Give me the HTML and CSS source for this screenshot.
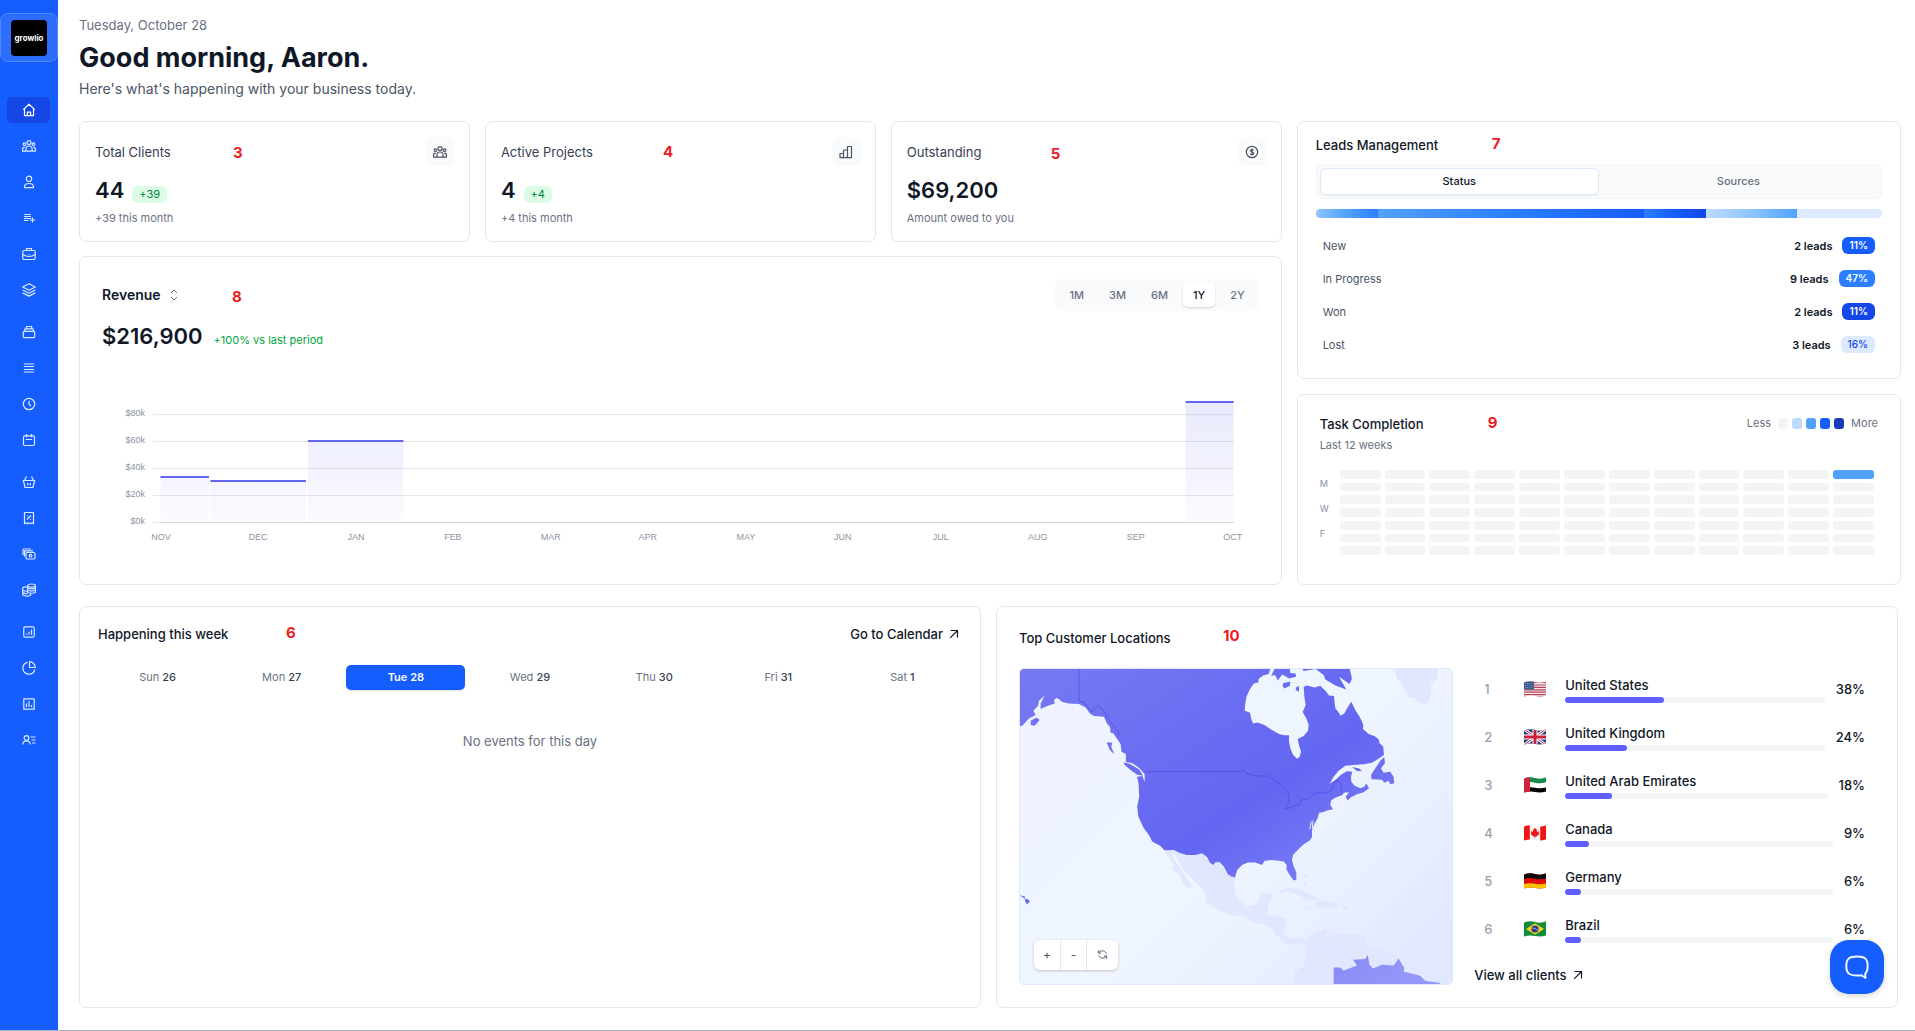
FILE: index.html
```html
<!DOCTYPE html>
<html lang="en">
<head>
<meta charset="utf-8">
<meta name="viewport" content="width=device-width, initial-scale=1">
<title>Growlio – Dashboard</title>
<link rel="stylesheet" href="styles.css">
</head>
<body>
<svg class="defs" width="0" height="0" aria-hidden="true">
  <symbol id="i-users" viewBox="0 0 14 14">
    <circle cx="7" cy="3.6" r="2"/><path d="M3.9 12.2V10.400A3.100 3.400 0 0 1 10.100 10.400V12.200Z"/>
    <circle cx="2.500" cy="5.200" r="1.300"/><circle cx="11.500" cy="5.200" r="1.300"/>
    <path d="M3.900 12.200H.5V10.500C.5 9 1.300 8.200 2.800 8.200M10.100 12.200H13.500V10.500C13.500 9 12.700 8.200 11.200 8.200"/>
  </symbol>
  <symbol id="i-arrow" viewBox="0 0 10 10"><path d="M1.500 1.500H8.500V8.500M8.500 1.500L1.200 8.800"/></symbol>
  <clipPath id="wave"><path d="M0 1.500Q5.500 -.5 11 1T22 .6V14.500Q16.500 16 11 15T0 15.600Z"/></clipPath>
</svg>

<div class="app">
  <nav class="sidebar" aria-label="Main">
    <a class="brand" href="#"><span class="brand-logo">growlio</span></a>
    <div class="nav-group">
      <a class="nav-item active" href="#" aria-label="Home"><svg viewBox="0 0 14 14"><path d="M1.200 6.600L7 1.200L12.800 6.600M2.500 5.600V12.600H11.500V5.600M5.400 12.600V9.200H8.600V12.600"/></svg></a>
      <a class="nav-item" href="#" aria-label="Clients"><svg><use href="#i-users"/></svg></a>
      <a class="nav-item" href="#" aria-label="Contacts"><svg viewBox="0 0 14 14"><circle cx="7" cy="3.800" r="2.700"/><path d="M2.500 12.700V11.700C2.500 9.500 4.200 8.500 7 8.500S11.500 9.500 11.500 11.700V12.700Z"/></svg></a>
      <a class="nav-item" href="#" aria-label="Add to list"><svg viewBox="0 0 14 14"><path d="M2 3.500H9M2 5.500H9M2 7.500H9M2 9.500H6.500M10.500 6.500V11.500M8 9H13"/></svg></a>
      <a class="nav-item" href="#" aria-label="Projects"><svg viewBox="0 0 14 14"><rect x=".8" y="3.500" width="12.400" height="9" rx="1.200"/><path d="M4.500 3.500V1.500H9.500V3.500M.8 7.500Q7 11.500 13.200 7.500M6.500 7.500H7.500"/></svg></a>
      <a class="nav-item" href="#" aria-label="Services"><svg viewBox="0 0 14 14"><path d="M7 .8L13.300 4L7 7.200L.7 4ZM.7 7L7 10.200L13.300 7M.7 9.900L7 13.100L13.300 9.900"/></svg></a>
    </div>
    <div class="nav-group">
      <a class="nav-item" href="#" aria-label="Templates"><svg viewBox="0 0 14 14"><rect x="1.300" y="6.300" width="11.400" height="6.400" rx="1.200"/><path d="M2.300 6L3.200 3.800H10.800L11.700 6M4 3.500L4.500 1.500H9.500L10 3.500"/></svg></a>
      <a class="nav-item" href="#" aria-label="Tasks"><svg viewBox="0 0 14 14"><path d="M1.800 3H12.200M1.800 5.500H12.200M1.800 8.500H12.200M1.800 11H12.200"/></svg></a>
      <a class="nav-item" href="#" aria-label="Time"><svg viewBox="0 0 14 14"><circle cx="7" cy="7" r="5.700"/><path d="M7 3.800V7L9 9.200"/></svg></a>
      <a class="nav-item" href="#" aria-label="Calendar"><svg viewBox="0 0 14 14"><rect x="1.500" y="2.800" width="11" height="9.700" rx="1.200"/><path d="M4.500 1V4.200M9.500 1V4.200M3.800 6.500H10.200"/></svg></a>
    </div>
    <div class="nav-group">
      <a class="nav-item" href="#" aria-label="Products"><svg viewBox="0 0 14 14"><path d="M1.200 5.500H12.800L12 8L11 12.500H3L2 8ZM2.500 5.500L4.500 1.500M11.500 5.500L9.500 1.500M5.700 8V10.500M8.300 8V10.500"/></svg></a>
      <a class="nav-item" href="#" aria-label="Invoices"><svg viewBox="0 0 14 14"><path d="M2.500 1.500H11.500V12.800L10 11.800L8.500 12.800L7 11.800L5.500 12.800L4 11.800L2.500 12.800ZM5 8.500L9 4.500M5 5H6M8 8.500H9"/></svg></a>
      <a class="nav-item" href="#" aria-label="Payments"><svg viewBox="0 0 14 14"><rect x="4" y="5.500" width="9" height="6.500" rx="1.200"/><circle cx="8.500" cy="8.700" r="1.300"/><path d="M2.500 9.500V4Q2.500 3.800 3 3.800H11M1 8V3Q1 2 2 2H9"/></svg></a>
      <a class="nav-item" href="#" aria-label="Expenses"><svg viewBox="0 0 14 14"><ellipse cx="9.500" cy="2.600" rx="3.900" ry="1.600"/><path d="M5.600 2.600V9.500Q9.500 11 13.400 9.500V2.600M5.600 5Q9.500 6.600 13.400 5M5.600 7.300Q9.500 8.800 13.400 7.300M5.300 4Q2 3.500 .7 4.800V11.800Q4 14 8.500 12.500V10.500M.7 7.200Q3 8.500 5.500 8.200M.7 9.600Q3 11 5.500 10.700"/></svg></a>
    </div>
    <div class="nav-group">
      <a class="nav-item" href="#" aria-label="Reports"><svg viewBox="0 0 14 14"><rect x="1.800" y="1.800" width="10.400" height="10.400" rx="1.200"/><path d="M4.500 9.800V8.500M7 9.800V6.800M9.500 9.800V4.500"/></svg></a>
      <a class="nav-item" href="#" aria-label="Analytics"><svg viewBox="0 0 14 14"><path d="M5.500 1.300A6 6 0 1 0 12.800 8.500M7.500 .7V6.500H13.300A6 6 0 0 0 7.500 .7Z"/></svg></a>
      <a class="nav-item" href="#" aria-label="Statistics"><svg viewBox="0 0 14 14"><rect x="1.800" y="1.800" width="10.400" height="10.400"/><path d="M4.500 10V6.500M7 10V4M9.500 10V8"/></svg></a>
      <a class="nav-item" href="#" aria-label="Team"><svg viewBox="0 0 14 14"><circle cx="4.500" cy="5" r="2.300"/><path d="M.7 11.500C1 8.800 2.500 7.800 4.500 7.800S8 8.800 8.300 11.500M8.500 4H13.500M9.500 7H13.500M10 10H13.500"/></svg></a>
    </div>
  </nav>

  <main class="main">
    <header class="greeting">
      <p class="date">Tuesday, October 28</p>
      <h1>Good morning, Aaron.</h1>
      <p class="lead">Here's what's happening with your business today.</p>
    </header>

    <div class="top-grid">
      <div class="left-col">
        <div class="stats">
          <section class="card stat">
            <div class="stat-head"><h2>Total Clients</h2><span class="icon-box"><svg><use href="#i-users"/></svg></span></div>
            <p class="stat-value"><strong>44</strong><span class="delta">+39</span></p>
            <p class="note">+39 this month</p>
            <span class="marker marker-3">3</span>
          </section>
          <section class="card stat">
            <div class="stat-head"><h2>Active Projects</h2><span class="icon-box"><svg viewBox="0 0 14 14"><path d="M1 12.600V8.500H4.500V12.600ZM4.500 12.600V5H8.500V12.600ZM8.500 12.600V1.500H12.500V12.600Z"/></svg></span></div>
            <p class="stat-value"><strong>4</strong><span class="delta">+4</span></p>
            <p class="note">+4 this month</p>
            <span class="marker marker-4">4</span>
          </section>
          <section class="card stat">
            <div class="stat-head"><h2>Outstanding</h2><span class="icon-box"><svg viewBox="0 0 14 14"><circle cx="7" cy="7" r="5.700"/><path d="M8.700 5.200C8.200 4.300 5.500 4.200 5.500 5.700S8.700 6.800 8.700 8.400S5.800 9.800 5.200 8.700M7 3.500V10.500"/></svg></span></div>
            <p class="stat-value"><strong>$69,200</strong></p>
            <p class="note">Amount owed to you</p>
            <span class="marker marker-5">5</span>
          </section>
        </div>

        <section class="card revenue">
          <div class="revenue-head">
            <button class="metric" type="button">Revenue <svg viewBox="0 0 12 12"><path d="M3 4L6 1L9 4M3 8L6 11L9 8"/></svg></button>
            <div class="ranges">
              <button type="button">1M</button><button type="button">3M</button><button type="button">6M</button><button class="selected" type="button">1Y</button><button type="button">2Y</button>
            </div>
          </div>
          <p class="revenue-total"><strong>$216,900</strong><span>+100% vs last period</span></p>
          <svg class="chart" viewBox="102 362 1157 200" role="img" aria-label="Revenue by month">
            <defs><linearGradient id="bar" gradientUnits="userSpaceOnUse" x1="0" y1="402" x2="0" y2="522"><stop offset="0" stop-color="#6366f1" stop-opacity=".14"/><stop offset="1" stop-color="#6366f1" stop-opacity=".03"/></linearGradient></defs>
            <path class="grid" d="M153 414.500H1234M153 441.500H1234M153 468.500H1234M153 495.500H1234M153 522.500H1234"/>
            <path fill="url(#bar)" d="M160.500 477H209V522H160.500ZM210.500 481H306V522H210.500ZM308 441H403.500V522H308ZM1186 402H1234V522H1186Z"/>
            <path class="axis" d="M160 522.500H1234"/>
            <path class="cap" d="M160.500 477H209M210.500 481H306M308 441H403.500M1186 402H1234"/>
            <g class="y-labels"><text x="145" y="416">$80k</text><text x="145" y="443">$60k</text><text x="145" y="470">$40k</text><text x="145" y="497">$20k</text><text x="145" y="524">$0k</text></g>
            <g class="x-labels"><text x="161" y="540">NOV</text><text x="258" y="540">DEC</text><text x="356" y="540">JAN</text><text x="453" y="540">FEB</text><text x="551" y="540">MAR</text><text x="648" y="540">APR</text><text x="746" y="540">MAY</text><text x="843" y="540">JUN</text><text x="941" y="540">JUL</text><text x="1038" y="540">AUG</text><text x="1136" y="540">SEP</text><text x="1233" y="540">OCT</text></g>
          </svg>
          <span class="marker marker-8">8</span>
        </section>
      </div>

      <div class="right-col">
        <section class="card leads">
          <h2>Leads Management</h2>
          <div class="tabs"><button class="selected" type="button">Status</button><button type="button">Sources</button></div>
          <div class="split-bar"><span class="s-new"></span><span class="s-progress"></span><span class="s-won"></span><span class="s-lost"></span></div>
          <ul class="lead-list">
            <li><span>New</span><strong>2 leads</strong><em class="p-new">11%</em></li>
            <li><span>In Progress</span><strong>9 leads</strong><em class="p-progress">47%</em></li>
            <li><span>Won</span><strong>2 leads</strong><em class="p-won">11%</em></li>
            <li><span>Lost</span><strong>3 leads</strong><em class="p-lost">16%</em></li>
          </ul>
          <span class="marker marker-7">7</span>
        </section>

        <section class="card tasks">
          <div class="tasks-head">
            <div><h2>Task Completion</h2><p class="note">Last 12 weeks</p></div>
            <div class="legend">Less<span class="swatches"><i class="l0"></i><i class="l1"></i><i class="l2"></i><i class="l3"></i><i class="l4"></i></span>More</div>
          </div>
          <div class="heat">
            <div class="heat-days"><span>M</span><span>W</span><span>F</span></div>
            <div class="heat-grid">
              <i></i><i></i><i></i><i></i><i></i><i></i><i></i><i></i><i></i><i></i><i></i><i class="l2"></i>
              <i></i><i></i><i></i><i></i><i></i><i></i><i></i><i></i><i></i><i></i><i></i><i></i>
              <i></i><i></i><i></i><i></i><i></i><i></i><i></i><i></i><i></i><i></i><i></i><i></i>
              <i></i><i></i><i></i><i></i><i></i><i></i><i></i><i></i><i></i><i></i><i></i><i></i>
              <i></i><i></i><i></i><i></i><i></i><i></i><i></i><i></i><i></i><i></i><i></i><i></i>
              <i></i><i></i><i></i><i></i><i></i><i></i><i></i><i></i><i></i><i></i><i></i><i></i>
              <i></i><i></i><i></i><i></i><i></i><i></i><i></i><i></i><i></i><i></i><i></i><i></i>
            </div>
          </div>
          <span class="marker marker-9">9</span>
        </section>
      </div>
    </div>

    <div class="bottom-grid">
      <section class="card week">
        <div class="week-head"><h2>Happening this week</h2><a class="link" href="#">Go to Calendar <svg><use href="#i-arrow"/></svg></a></div>
        <div class="days">
          <button type="button">Sun <b>26</b></button><button type="button">Mon <b>27</b></button><button class="selected" type="button">Tue <b>28</b></button><button type="button">Wed <b>29</b></button><button type="button">Thu <b>30</b></button><button type="button">Fri <b>31</b></button><button type="button">Sat <b>1</b></button>
        </div>
        <p class="empty">No events for this day</p>
        <span class="marker marker-6">6</span>
      </section>

      <section class="card locations">
        <h2>Top Customer Locations</h2>
        <div class="locations-body">
          <div class="map">
            <svg class="map-art" viewBox="28 205 1298 949" preserveAspectRatio="xMidYMid slice" role="img" aria-label="Customer map of North America">
              <defs><linearGradient id="land" gradientUnits="userSpaceOnUse" x1="250" y1="100" x2="1000" y2="1250"><stop offset="0" stop-color="#7678f2"/><stop offset=".5" stop-color="#6366f1"/><stop offset="1" stop-color="#9496f8"/></linearGradient></defs>
              <g class="land-quiet">
                <path d="M1155 205H1282L1280 235L1262 250L1262 275L1252 308L1235 310L1210 292L1195 290L1175 250L1160 232Z"/>
                <path d="M480 752L528 765L575 760L598 788L628 787L652 822L674 832L670 860L675 885L690 905L710 920L735 915L745 905L750 888L768 882L785 885L780 900L772 912L770 935L760 945L790 950L822 955L825 965L818 1000L835 1020L870 1018L890 1022L885 1036L860 1028L845 1035L825 1030L800 1005L785 985L760 972L725 965L700 948L665 945L620 930L585 905L590 885L570 860L545 835L520 810L495 765Z"/>
                <path d="M462 752L482 752L490 780L505 800L522 825L543 860L537 868L515 846L510 826L485 808L490 795Z"/>
                <path d="M885 1025L900 1008L920 1000L948 988L952 994L938 1012L955 1014L965 1003L1010 1005L1060 1008L1062 1020L1085 1045L1110 1055L1140 1060L1165 1075L1140 1095L1110 1100L1072 1072L1030 1085L1028 1098L1000 1112L970 1106L972 1154H850L855 1118L880 1100L888 1062Z"/>
                <path d="M805 880L830 865L870 870L890 882L922 897L890 900L865 885L830 873ZM920 905L960 905L985 915L960 923L918 918ZM875 920L900 922L890 927ZM995 918L1015 921L1005 926ZM868 822L890 824L888 830ZM880 842L887 852L883 858Z"/>
                <path d="M734 918L732 935L745 945M770 960L800 958M790 985L818 985M925 1003L918 1030L940 1045L975 1050L975 1075M1062 1020L1058 1045L1072 1066M1100 1055L1098 1098M1138 1062L1130 1095M852 1118L885 1110L920 1130L915 1154"/>
              </g>
              <path fill="url(#land)" d="M28 205H780L775 222L758 226L745 236L744 247L730 250L718 268L708 290L704 315L703 332L719 338L722 355L728 370L742 367L762 375L780 387L806 402L822 406L836 406L836 425L840 445L848 464L860 476L868 470L872 455L866 436L862 417L880 408L893 392L895 375L888 355L877 336L886 315L882 290L880 260L890 256L912 262L930 257L948 275L956 286L971 288L973 310L975 325L984 335L991 347L1002 340L1010 325L1023 305L1035 330L1048 350L1059 373L1058 387L1075 402L1092 408L1105 418L1108 430L1119 440L1121 465L1105 476L1085 488L1060 493L1030 495L1005 497L985 512L970 530L958 551L975 540L992 524L1010 514L1026 515L1022 530L1023 545L1033 557L1050 565L1062 560L1068 550L1076 565L1060 577L1040 583L1022 592L1012 602L1006 590L1016 578L1000 576L998 584L975 593L962 602L960 615L968 628L950 632L925 642L922 655L912 672L905 690L905 712L898 722L880 733L862 750L848 765L845 780L850 800L858 818L858 840L850 842L838 825L828 808L829 795L820 785L800 782L780 780L762 783L755 795L735 788L712 788L695 795L680 810L674 832L662 830L652 822L640 800L628 787L615 787L608 795L598 788L590 772L575 760L555 765L528 765L505 758L490 750L462 751L450 738L425 725L415 705L400 685L390 665L383 648L380 620L386 590L384 550L379 530L395 528L403 545L402 522L385 503L365 490L346 486L346 462L333 455L330 432L316 412L308 400L300 398L298 380L290 372L280 350L250 348L238 340L225 322L205 312L175 310L155 306L140 294L130 298L132 310L110 318L90 327L90 310L102 286L85 302L82 318L68 332L75 345L55 355L34 378H28ZM793 205L782 228L794 225L802 241L816 223L836 235L857 230L856 220L840 219L838 205ZM820 248L840 245L838 258L822 265L816 256ZM857 262L866 257L866 275L856 270ZM875 205H1018L1025 235L1018 252L986 230L1008 268L975 256L945 238L940 225L916 207L880 213ZM1122 472L1112 480L1098 500L1082 525L1084 538L1115 539L1122 548L1135 542L1140 553L1152 550L1150 530L1140 515L1120 518L1112 505L1124 490ZM340 487L360 493L385 508L398 527L380 524L360 510L342 495ZM288 427L305 428L302 440L311 463L298 450ZM60 362L78 352L87 360L72 377L60 375ZM28 886L42 890L44 898ZM42 900L50 897L58 905L48 914ZM1025 501L1045 505L1056 514L1040 513ZM970 1154V1103L990 1103L1000 1112L1020 1105L1040 1097L1028 1080L1065 1078L1072 1066L1078 1095L1088 1106L1115 1095L1150 1097L1165 1076L1182 1105L1180 1115L1230 1128L1245 1143L1290 1150V1154Z"/>
              <path class="inlet" d="M1030 552Q1042 562 1055 555M903 665L898 688M908 662L906 685M925 640L945 637"/>
              <path class="border" d="M205 205V303L222 308L243 335L262 316L280 332L300 368L325 395L322 412M403 515H695L700 510L708 520L735 528L768 528L790 538L815 560L834 580L836 600L826 627L850 620L870 612L872 600L895 597L912 580L950 578L965 570L970 548L985 542L993 555L993 575L1004 578"/>
            </svg>
            <div class="map-tools"><button type="button" aria-label="Zoom in">+</button><button type="button" aria-label="Zoom out">-</button><button class="reset" type="button" aria-label="Reset"><svg viewBox="0 0 12 12"><path d="M1.500 1.500V4.500H4.500M1.700 4.300C3 1.500 8.500 .8 10.200 5M10.500 10.500V7.500H7.500M10.300 7.700C9 10.500 3.500 11.200 1.800 7"/></svg></button></div>
          </div>
          <div class="countries">
            <ol>
              <li><span class="rank">1</span>
                <svg class="flag" viewBox="0 0 22 16"><g clip-path="url(#wave)"><path fill="#f5e6ea" d="M0 0H22V16H0Z"/><path stroke="#b4445c" stroke-width="1.200" d="M0 1.500H22M0 4H22M0 6.400H22M0 8.800H22M0 11.200H22M0 13.600H22M0 15.700H22"/><path fill="#3c5a8c" d="M0 0H10V8.500H0Z"/><path stroke="#9fb3d0" stroke-width=".6" stroke-dasharray="1 1" d="M1 2.500H9.500M1 4.500H9.500M1 6.500H9.500"/></g></svg>
                <div class="place"><span>United States</span><div class="track"><i style="width:38%"></i></div></div><strong>38%</strong></li>
              <li><span class="rank">2</span>
                <svg class="flag" viewBox="0 0 22 16"><g clip-path="url(#wave)"><path fill="#1f3f83" d="M0 0H22V16H0Z"/><path stroke="#fff" stroke-width="3" d="M0 0L22 16M22 0L0 16"/><path stroke="#c8203c" stroke-width="1" d="M0 0L22 16M22 0L0 16"/><path stroke="#fff" stroke-width="5" d="M11 0V16M0 8H22"/><path stroke="#c8203c" stroke-width="3" d="M11 0V16M0 8H22"/></g></svg>
                <div class="place"><span>United Kingdom</span><div class="track"><i style="width:24%"></i></div></div><strong>24%</strong></li>
              <li><span class="rank">3</span>
                <svg class="flag" viewBox="0 0 22 16"><g clip-path="url(#wave)"><path fill="#fff" d="M0 0H22V16H0Z"/><path fill="#138a4b" d="M0 0H22V5.200Q16.500 7 11 5.700T0 6Z"/><path fill="#000" d="M0 11Q5.500 9.500 11 10.700T22 10.500V16H0Z"/><path fill="#d3243e" d="M0 0H6V16H0Z"/></g></svg>
                <div class="place"><span>United Arab Emirates</span><div class="track"><i style="width:18%"></i></div></div><strong>18%</strong></li>
              <li><span class="rank">4</span>
                <svg class="flag" viewBox="0 0 22 16"><g clip-path="url(#wave)"><path fill="#f4f4f4" d="M0 0H22V16H0Z"/><path fill="#f01414" d="M0 0H5.800V16H0ZM16.200 0H22V16H16.200ZM11 2.500L12.200 4.800L13.200 4.300L12.900 7.200L15 6L14.800 8.200L15.300 9L12.500 11.500H11.300V13.500H10.700V11.500H9.500L6.700 9L7.200 8.200L7 6L9.100 7.200L8.800 4.300L9.800 4.800Z"/></g></svg>
                <div class="place"><span>Canada</span><div class="track"><i style="width:9%"></i></div></div><strong>9%</strong></li>
              <li><span class="rank">5</span>
                <svg class="flag" viewBox="0 0 22 16"><g clip-path="url(#wave)"><path fill="#e00b0b" d="M0 0H22V16H0Z"/><path fill="#0a0a0a" d="M0 0H22V5.200Q16.500 7 11 5.700T0 6Z"/><path fill="#f7c600" d="M0 11Q5.500 9.500 11 10.700T22 10.500V16H0Z"/></g></svg>
                <div class="place"><span>Germany</span><div class="track"><i style="width:6%"></i></div></div><strong>6%</strong></li>
              <li><span class="rank">6</span>
                <svg class="flag" viewBox="0 0 22 16"><g clip-path="url(#wave)"><path fill="#128c3c" d="M0 0H22V16H0Z"/><path fill="#f8cf1c" d="M2 8L11 2.200L20 8L11 13.800Z"/><circle cx="11" cy="8" r="3.600" fill="#2b3a8e"/><path stroke="#cdd6ee" stroke-width=".7" fill="none" d="M7.800 7Q11.500 6.600 14 9.500"/></g></svg>
                <div class="place"><span>Brazil</span><div class="track"><i style="width:6%"></i></div></div><strong>6%</strong></li>
            </ol>
            <a class="link" href="#">View all clients <svg><use href="#i-arrow"/></svg></a>
          </div>
        </div>
        <span class="marker marker-10">10</span>
      </section>
    </div>
  </main>
</div>

<button class="chat" type="button" aria-label="Open chat"><svg viewBox="0 0 24 24"><path d="M12 1.500C4 1.500 1.300 4 1.300 11S4 20.500 12 20.500Q14.500 20.500 16.500 20.200L20.500 23L20.200 18.500C22.200 17 22.700 14.500 22.700 11C22.700 4 20 1.500 12 1.500Z"/></svg></button>
</body>
</html>
```
FILE: styles.css
```css
:root {
  --ink: #101828;
  --body: #364153;
  --muted: #6a7282;
  --faint: #99a1af;
  --line: #e5e7eb;
  --soft: #f9fafb;
  --track: #f3f4f6;
  --blue: #155dfc;
  --indigo: #615fff;
}

*, *::before, *::after { box-sizing: border-box; }

body {
  margin: 0;
  font-family: Inter, "Liberation Sans", sans-serif;
  font-size: 13px;
  line-height: 18px;
  color: var(--ink);
  background: #fff;
}

h1, h2, p, ul, ol { margin: 0; padding: 0; }
ul, ol { list-style: none; }
h2 { font-size: 13px; line-height: 18px; font-weight: 500; }
button { font: inherit; color: inherit; background: none; border: 0; padding: 0; }
a { color: inherit; text-decoration: none; }
svg { display: block; fill: none; }
.defs { position: absolute; }

.app {
  display: flex;
  min-height: 100vh;
  border-bottom: 1px solid #aab0b9;
}

/* Sidebar */
.sidebar {
  flex: none;
  width: 58px;
  padding-top: 13px;
  background: var(--blue);
  color: #dbeafe;
}
.brand {
  display: flex;
  align-items: center;
  justify-content: center;
  height: 49px;
  margin-bottom: 35px;
  border: 1px solid #5089fd;
  border-radius: 8px;
  background: #2c6dfd;
}
.brand-logo {
  display: flex;
  align-items: center;
  justify-content: center;
  width: 36px;
  height: 36px;
  border-radius: 4px;
  background: #000;
  color: #fff;
  font-size: 8px;
  font-weight: 700;
  line-height: 10px;
}
.nav-group {
  display: flex;
  flex-direction: column;
  gap: 10px;
  padding: 0 8px 0 7px;
  margin-bottom: 16px;
}
.nav-item {
  display: flex;
  align-items: center;
  justify-content: center;
  height: 26px;
  border-radius: 5px;
}
.nav-item.active { background: #1447e6; color: #fff; }
.nav-item svg, .icon-box svg {
  width: 14px;
  height: 14px;
  stroke: currentColor;
  stroke-width: 1.2;
  stroke-linejoin: round;
}

/* Page */
.main {
  flex: 1;
  min-width: 0;
  padding: 16px 14px 20px 21px;
}
.greeting { margin-bottom: 22px; }
.date { color: var(--muted); }
h1 { margin: 8px 0 5px; font-size: 27px; line-height: 32px; font-weight: 700; }
.lead { font-size: 14px; line-height: 20px; color: #4a5565; }

.card {
  position: relative;
  border: 1px solid var(--line);
  border-radius: 7px;
  background: #fff;
}
.note { font-size: 11px; line-height: 16px; color: var(--muted); }

.top-grid {
  display: grid;
  grid-template-columns: 1.99fr 1fr;
  gap: 15px;
}
.left-col, .right-col {
  display: flex;
  flex-direction: column;
  gap: 14px;
  min-width: 0;
}
.right-col { gap: 15px; }

/* Stat cards */
.stats { display: grid; grid-template-columns: repeat(3, 1fr); gap: 15px; }
.stat { padding: 15px 14px 15px 15px; }
.stat-head { display: flex; align-items: center; justify-content: space-between; margin-bottom: 10px; }
.stat-head h2 { font-weight: 400; color: var(--body); }
.icon-box {
  display: flex;
  align-items: center;
  justify-content: center;
  width: 29px;
  height: 29px;
  border-radius: 7px;
  background: var(--soft);
  color: #4a5565;
}
.stat-value { display: flex; align-items: baseline; gap: 8px; height: 28px; margin-bottom: 6px; }
.stat-value strong, .revenue-total strong { font-size: 22px; line-height: 28px; font-weight: 600; }
.delta {
  padding: 0 7px;
  border-radius: 5px;
  background: #dcfce7;
  color: #008236;
  font-size: 11px;
  line-height: 17px;
}

/* Revenue */
.revenue { flex: 1; padding: 22px; }
.revenue-head { display: flex; align-items: center; justify-content: space-between; margin-bottom: 11px; }
.metric { display: flex; align-items: center; gap: 7px; font-size: 14px; font-weight: 600; }
.metric svg { width: 12px; height: 12px; stroke: var(--muted); }
.ranges {
  display: flex;
  gap: 5px;
  padding: 4px;
  border-radius: 8px;
  background: var(--soft);
  color: var(--muted);
  font-size: 11px;
  line-height: 24px;
  font-weight: 500;
}
.ranges button { padding: 0 10px; border-radius: 5px; }
.ranges .selected { background: #fff; color: var(--ink); box-shadow: 0 1px 2px rgba(0, 0, 0, .15); }
.revenue-total { display: flex; align-items: baseline; gap: 11px; margin-bottom: 12px; }
.revenue-total span { font-size: 11px; color: #00a63e; }
.chart { width: 100%; height: auto; }
.chart .grid { stroke: var(--line); }
.chart .axis { stroke: #d1d5db; }
.chart .cap { stroke: #6366f1; stroke-width: 2; }
.chart text { font-family: "Liberation Sans", Arial, sans-serif; font-size: 9px; fill: #8b93a1; }
.y-labels { text-anchor: end; }
.x-labels { text-anchor: middle; }

/* Leads */
.leads { padding: 14px 18px 17px; }
.tabs {
  display: grid;
  grid-template-columns: 1fr 1fr;
  margin: 10px 0 10px;
  padding: 3px;
  border: 1px solid var(--track);
  border-radius: 7px;
  background: var(--soft);
  font-size: 11px;
  line-height: 25px;
  font-weight: 500;
  color: var(--muted);
}
.tabs button { border: 1px solid transparent; border-radius: 6px; }
.tabs .selected { border-color: #dbeafe; background: #fff; color: var(--ink); box-shadow: 0 1px 2px rgba(0, 0, 0, .06); }
.split-bar { display: flex; height: 9px; margin-bottom: 11px; border-radius: 5px; overflow: hidden; background: #dbeafe; }
.s-new { width: 11%; background: linear-gradient(90deg, #8ec5ff, #51a2ff, #2b7fff); }
.s-progress { width: 47%; background: linear-gradient(90deg, #51a2ff, #2b7fff, #155dfc); }
.s-won { width: 11%; background: linear-gradient(90deg, #2b7fff, #155dfc, #1447e6); }
.s-lost { width: 16%; background: linear-gradient(90deg, #bedbff, #8ec5ff, #51a2ff); }
.lead-list li { display: flex; align-items: center; height: 33px; padding: 0 7px; font-size: 11px; }
.lead-list span { flex: 1; color: #4a5565; }
.lead-list strong { margin-right: 10px; font-weight: 600; }
.lead-list em {
  padding: 0 7px;
  border-radius: 6px;
  color: #fff;
  font-size: 10px;
  line-height: 17px;
  font-style: normal;
  font-weight: 600;
}
.p-new { background: #155dfc; }
.p-progress { background: #2b7fff; }
.p-won { background: #1447e6; }
.lead-list .p-lost { background: #dbeafe; color: #1447e6; font-weight: 500; }

/* Task heat map */
.tasks { flex: 1; padding: 20px 22px 28px; }
.tasks-head { display: flex; justify-content: space-between; align-items: flex-start; margin-bottom: 17px; }
.tasks-head .note { margin-top: 4px; }
.legend { display: flex; align-items: center; gap: 7px; font-size: 11px; line-height: 16px; color: var(--muted); }
.swatches { display: flex; gap: 4px; }
.swatches i { width: 10px; height: 11px; border-radius: 3px; }
.l0 { background: #f3f4f6; }
.l1 { background: #bedbff; }
.l3 { background: #155dfc; }
.l4 { background: #193cb8; }
.heat { display: flex; gap: 4px; height: 85px; padding-right: 4px; }
.heat-days {
  display: flex;
  flex-direction: column;
  gap: 17px;
  width: 16px;
  padding-top: 10px;
  font-size: 9px;
  line-height: 8px;
  font-weight: 500;
  color: var(--faint);
}
.heat-grid { display: grid; flex: 1; grid-template: repeat(7, 1fr) / repeat(12, 1fr); gap: 4px; }
.heat-grid i { border-radius: 3px; background: #f3f4f6; }
.swatches .l2, .heat-grid .l2 { background: #51a2ff; }

/* Bottom row */
.bottom-grid {
  display: grid;
  grid-template-columns: 1fr 1fr;
  gap: 15px;
  margin: 21px 3px 0 0;
}
.link { display: flex; align-items: center; gap: 6px; font-weight: 500; }
.link svg { width: 10px; height: 10px; stroke: currentColor; stroke-width: 1.2; }

.week { padding: 18px; }
.week-head { display: flex; justify-content: space-between; padding-right: 3px; margin-bottom: 22px; }
.days { display: grid; grid-template-columns: repeat(7, 1fr); gap: 5px; font-size: 11px; line-height: 25px; color: var(--muted); }
.days button { border-radius: 5px; }
.days b { font-weight: 500; color: var(--body); }
.days .selected { background: var(--blue); color: #fff; font-weight: 600; box-shadow: 0 1px 2px rgba(0, 0, 0, .12); }
.days .selected b { color: #fff; font-weight: 600; }
.empty { margin-top: 42px; text-align: center; color: var(--muted); }

.locations { padding: 22px; }
.locations-body { display: grid; grid-template-columns: 13fr 12fr; gap: 21px; margin-top: 21px; }
.map {
  position: relative;
  align-self: start;
  aspect-ratio: 433 / 316;
  border: 1px solid #e0e7ff;
  border-radius: 5px;
  overflow: hidden;
  background: linear-gradient(135deg, #eef2ff, #eff6ff 50%, #e0e7ff);
}
.map-art { width: 100%; height: 100%; }
.land-quiet { fill: #e0e7ff; stroke: #d9e0fb; stroke-width: 1; }
.land-quiet path:last-child { fill: none; }
.border { stroke: #4f46e5; stroke-width: 2; }
.inlet { stroke: #eaf0ff; stroke-width: 3; }
.map-tools {
  position: absolute;
  left: 14px;
  bottom: 14px;
  display: flex;
  height: 30px;
  border-radius: 6px;
  background: #fff;
  box-shadow: 0 1px 3px rgba(0, 0, 0, .2);
  color: #4a5565;
  font-size: 12px;
}
.map-tools button { width: 26px; border-left: 1px solid var(--line); }
.map-tools button:first-child { border-left: 0; }
.map-tools .reset { display: grid; place-items: center; width: 32px; }
.map-tools svg { width: 11px; height: 11px; stroke: currentColor; }

.countries { padding-top: 8px; }
.countries ol { display: flex; flex-direction: column; gap: 21px; margin-bottom: 23px; }
.countries li { display: grid; grid-template-columns: 40px 41px 1fr auto; align-items: center; padding: 0 10px; }
.countries li strong { padding-left: 11px; font-weight: 500; }
.rank { color: var(--faint); font-weight: 500; }
.flag { width: 22px; height: 16px; }
.place { font-weight: 500; }
.track { height: 6px; margin-top: 3px; border-radius: 3px; background: var(--track); }
.track i { display: block; height: 6px; border-radius: 3px; background: var(--indigo); }

/* Step markers laid over the cards */
.marker { position: absolute; color: #ed1c24; font-size: 15px; line-height: 18px; font-weight: 700; }
.marker-3 { left: 153px; top: 22px; }
.marker-4 { left: 177px; top: 21px; }
.marker-5 { left: 159px; top: 23px; }
.marker-6 { left: 206px; top: 17px; }
.marker-7 { left: 194px; top: 13px; }
.marker-8 { left: 152px; top: 31px; }
.marker-9 { left: 190px; top: 19px; }
.marker-10 { left: 226px; top: 20px; }

.chat {
  position: fixed;
  right: 31px;
  bottom: 37px;
  display: grid;
  place-items: center;
  width: 54px;
  height: 54px;
  border-radius: 19px;
  background: var(--blue);
  box-shadow: 0 2px 6px rgba(0, 0, 0, .15);
}
.chat svg { width: 24px; height: 24px; stroke: #eff6ff; stroke-width: 2; stroke-linejoin: round; }
```
